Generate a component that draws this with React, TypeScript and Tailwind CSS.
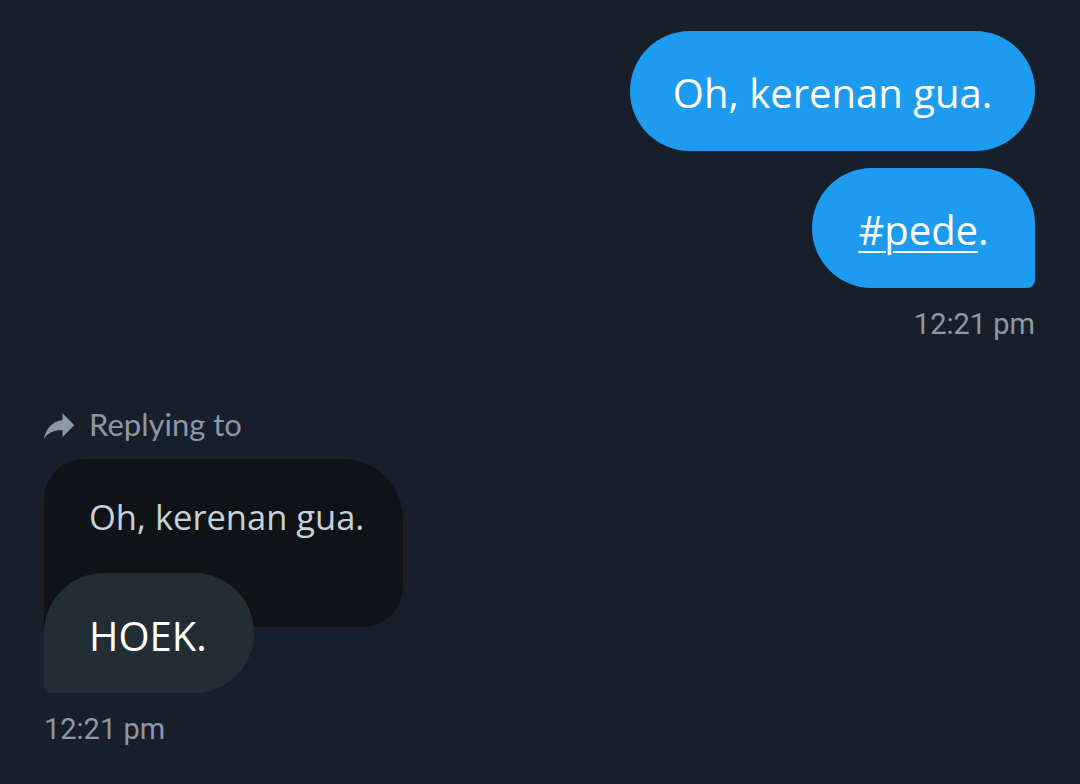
import React from 'react';

const font = { fontFamily: '"Open Sans", "Liberation Sans", sans-serif' };

function ReplyIcon() {
  return (
    <svg width="32" height="30" viewBox="3 4 19 17" className="text-[#8b98a5]">
      <g transform="translate(24 0) scale(-1 1)">
        <path fill="currentColor" d="M10 9V5l-7 7 7 7v-4.1c5 0 8.5 1.6 11 5.1-1-5-4-10-11-11z" />
      </g>
    </svg>
  );
}

export default function App() {
  return (
    <div className="w-[1080px] h-[784px] bg-[#17202a] overflow-hidden px-[44px] pt-[31px] flex flex-col" style={font}>
      <div className="flex flex-col items-end pr-px">
        <div className="h-[120px] w-[405px] bg-[#1d9bf0] rounded-full flex items-center justify-center pt-[4px] text-white text-[40px]">
          Oh, kerenan gua.
        </div>
        <div className="mt-[17px] h-[120px] w-[223px] bg-[#1d9bf0] rounded-tl-[60px] rounded-tr-[56px] rounded-bl-[60px] rounded-br-[8px] flex items-center justify-center pt-[4px] text-white text-[40px]">
          <span><span className="underline underline-offset-[6px] decoration-2">#pede</span>.</span>
        </div>
        <div className="mt-[22px] text-[29px] text-[#8b98a5] leading-none" style={{ fontFamily: 'Roboto, sans-serif' }}>
          12:21 pm
        </div>
      </div>

      <div className="mt-[72px] flex items-center gap-[13px] text-[31px] text-[#8b98a5] leading-none" style={{ fontFamily: 'Lato, sans-serif' }}>
        <ReplyIcon />
        <span className="-mt-1">Replying to</span>
      </div>

      <div className="mt-[18px] flex flex-col">
        <div className="w-[359px] h-[168px] bg-[#0f1318] rounded-tl-[40px] rounded-tr-[60px] rounded-br-[40px] rounded-bl-[0px] pl-[45px] pt-[41px] text-[34.5px] text-[#c7d1da] leading-none">
          Oh, kerenan gua.
        </div>
        <div className="-mt-[54px] w-[210px] h-[120px] bg-[#222d36] rounded-tl-[60px] rounded-tr-[60px] rounded-br-[60px] rounded-bl-[6px] flex items-center pl-[45px] pt-[5px] text-[40px] text-white">
          HOEK.
        </div>
        <div className="mt-[22px] text-[29px] text-[#8b98a5] leading-none" style={{ fontFamily: 'Roboto, sans-serif' }}>
          12:21 pm
        </div>
      </div>
    </div>
  );
}
